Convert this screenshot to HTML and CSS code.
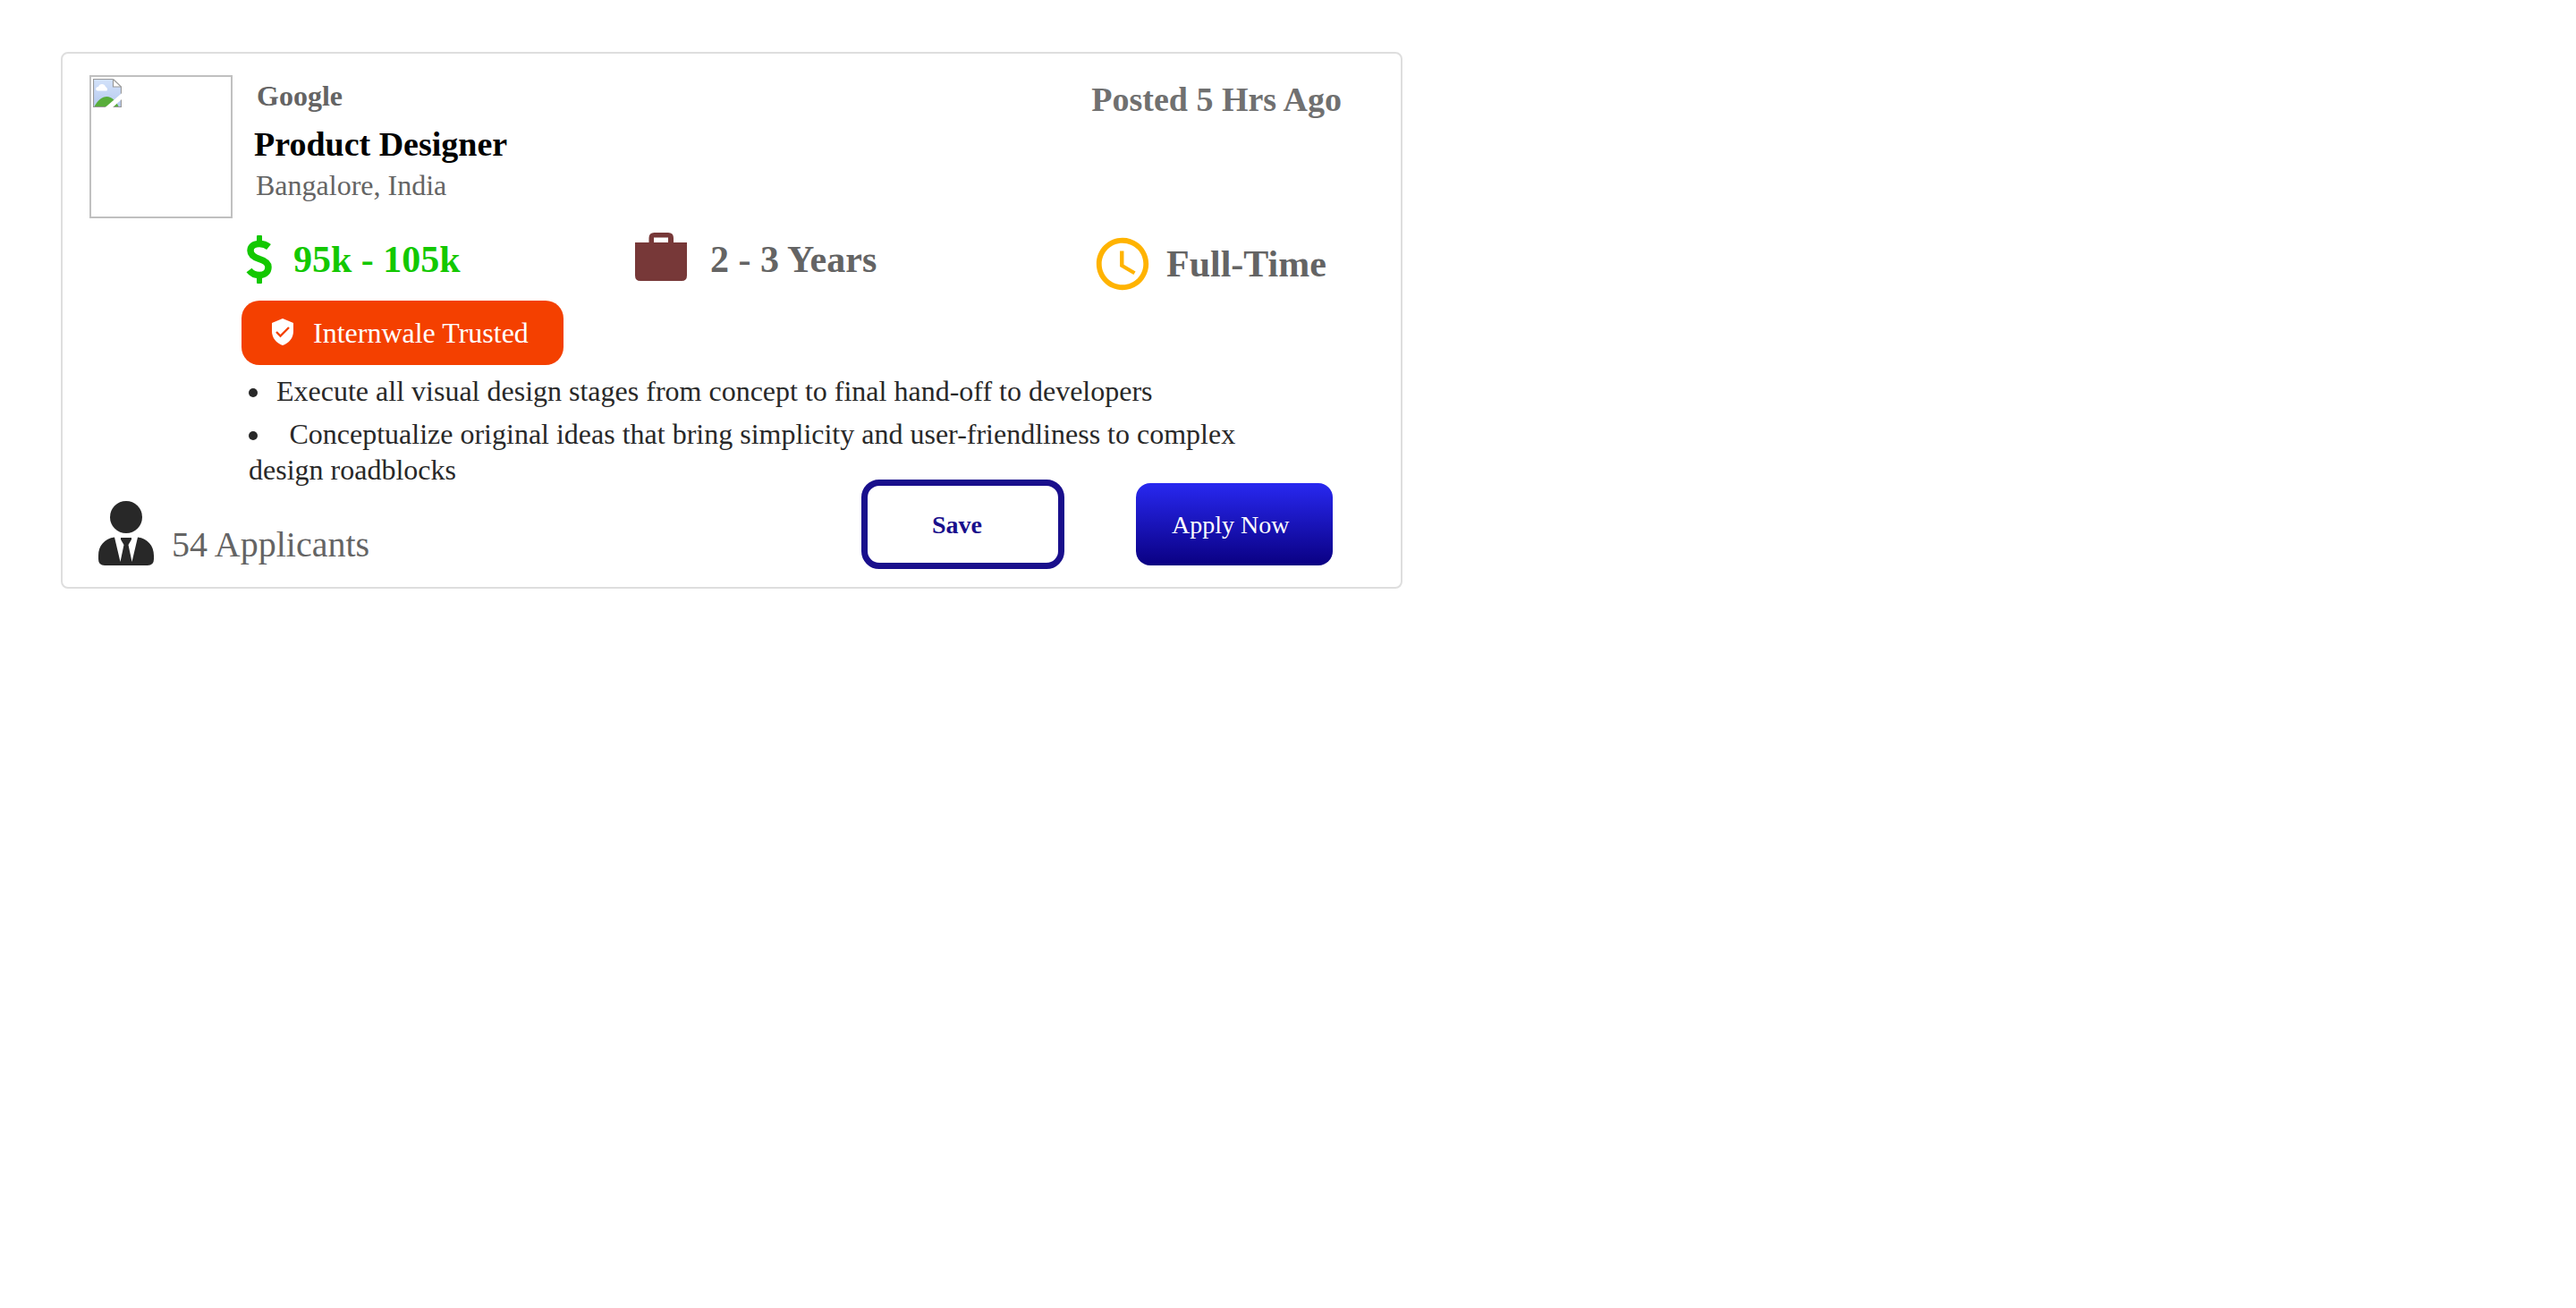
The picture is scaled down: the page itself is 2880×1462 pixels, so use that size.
FILE: index.html
```html
<!DOCTYPE html>
<html lang="en">
<head>
  <meta charset="utf-8">
  <title>Product Designer at Google</title>
  <link rel="stylesheet" href="styles.css">
</head>
<body>
  <main class="page">
    <article class="card">
      <header class="card-header">
        <div class="logo">
          <svg class="logo-icon" viewBox="0 0 32 32" aria-hidden="true">
            <defs>
              <linearGradient id="sky" x1="0" y1="0" x2="0" y2="1">
                <stop offset="0" stop-color="#d3e2fa"/>
                <stop offset="1" stop-color="#b5c9ef"/>
              </linearGradient>
            </defs>
            <path d="M0.5 0.5H22L31.5 9.5V32H0.5Z" fill="url(#sky)"/>
            <path d="M1 32C5 24 10 20 15.500 20C21 20 26 25 29 32Z" fill="#58ad3b"/>
            <path d="M5 13.500C2 12.500 3 9 6 9C7 5 13 5 14 9C16 10 17 13 15 13.500Z" fill="#fff"/>
            <path d="M22.500 0.500V9H31.500" fill="#fff" stroke="#999" stroke-width="1.200"/>
            <path d="M22 0.500H0.500V31.500H31.500V9L22.500 0.500" fill="none" stroke="#999" stroke-width="1.200"/>
            <path d="M33 15.500V22L21 33H12.500Z" fill="#fff"/>
          </svg>
        </div>
        <div class="titles">
          <p class="company">Google</p>
          <h1 class="role">Product Designer</h1>
          <p class="location">Bangalore, India</p>
        </div>
        <p class="posted">Posted 5 Hrs Ago</p>
      </header>

      <div class="card-body">
        <div class="stats">
          <div class="stat stat-pay">
            <svg class="icon-dollar" viewBox="0 0 44 60" aria-hidden="true">
              <path d="M30.500 16C27.500 13.500 24 12.500 20 12.500C14 12.500 10 15.500 10 20C10 25 14 27.500 20 29.500C26.500 31.500 30 34 30 38.500C30 44 26 47.500 20 47.500C15 47.500 11.500 46 8.500 42" fill="none" stroke="currentColor" stroke-width="7.500"/>
              <rect x="17" y="3" width="6" height="10" rx="1" fill="currentColor"/>
              <rect x="17" y="47" width="6" height="10" rx="1" fill="currentColor"/>
            </svg>
            <span>95k - 105k</span>
          </div>
          <div class="stat">
            <svg class="icon-case" viewBox="0 0 70 60" aria-hidden="true">
              <path fill="#773838" fill-rule="evenodd" d="M0 11H15.500V6Q15.500 0 21.500 0H37Q43 0 43 6V11H58V48Q58 54 52 54H6Q0 54 0 48ZM21 5.500V11H37V5.500Z"/>
            </svg>
            <span>2 - 3 Years</span>
          </div>
          <div class="stat">
            <svg class="icon-clock" viewBox="0 0 24 24" aria-hidden="true">
              <path fill="#ffb300" d="M11.990 2C6.470 2 2 6.480 2 12s4.470 10 9.990 10C17.520 22 22 17.520 22 12S17.520 2 11.990 2zM12 20c-4.420 0-8-3.580-8-8s3.580-8 8-8 8 3.580 8 8-3.580 8-8 8zm.5-13H11v6l5.250 3.150.75-1.230-4.500-2.670z"/>
            </svg>
            <span>Full-Time</span>
          </div>
        </div>

        <div class="badge">
          <svg class="icon-shield" viewBox="0 0 24 34" aria-hidden="true">
            <path fill="#fff" d="M12 1L24 6V15C24 23 19 28.500 12 31C5 28.500 0 23 0 15V6Z"/>
            <path fill="none" stroke="#f44000" stroke-width="2.400" d="M5 16L9.500 20.500L19 11"/>
          </svg>
          <span>Internwale Trusted</span>
        </div>

        <ul class="duties">
          <li><span class="duty">Execute all visual design stages from concept to final hand-off to developers</span></li>
          <li><span class="duty">&nbsp;&thinsp;Conceptualize original ideas that bring simplicity and user-friendliness to complex design roadblocks</span></li>
        </ul>
      </div>

      <footer class="card-footer">
        <div class="applicants">
          <svg class="icon-person" viewBox="0 0 62 72" aria-hidden="true">
            <g fill="#282828">
              <circle cx="31" cy="18" r="18"/>
              <path d="M18 40.500L24.500 68L28.500 49L25 43V41H37V43L33.500 49L37.500 68L44 40.500C55 42 62 50 62 61V65Q62 72 55 72H7Q0 72 0 65V61C0 50 7 42 18 40.500Z"/>
            </g>
          </svg>
          <span>54 Applicants</span>
        </div>
        <div class="actions">
          <button class="btn btn-save" type="button">Save</button>
          <button class="btn btn-apply" type="button">Apply Now</button>
        </div>
      </footer>
    </article>
  </main>
</body>
</html>
```
FILE: styles.css
```css
* {
  box-sizing: border-box;
}

body {
  margin: 0;
  background: #fff;
  color: #282828;
  font-family: "Liberation Serif", "Times New Roman", serif;
  font-size: 32px;
  line-height: 40px;
}

h1,
p,
ul {
  margin: 0;
}

svg {
  display: block;
  flex: none;
}

.page {
  padding: 58px 68px;
}

.card {
  max-width: 1500px;
  padding: 24px 66px 20px 30px;
  border: 2px solid #dedede;
  border-radius: 8px;
}

.card-header {
  display: flex;
  align-items: flex-start;
  gap: 24px;
}

.logo {
  flex: none;
  width: 160px;
  height: 160px;
  padding: 2px;
  border: 2px solid #c0c0c0;
}

.logo-icon {
  width: 32px;
  height: 32px;
}

.titles {
  flex: 1;
  padding-top: 3px;
}

.company {
  padding-left: 3px;
  color: #646464;
  font-weight: bold;
}

.role {
  margin-top: 4px;
  color: #000;
  font-size: 38px;
  line-height: 60px;
}

.location {
  padding-left: 2px;
  color: #646464;
  line-height: 32px;
}

.posted {
  margin-top: 5px;
  color: #707070;
  font-size: 38px;
  font-weight: bold;
  line-height: 44px;
}

.card-body {
  padding: 16px 0 0 170px;
}

.stats {
  display: grid;
  grid-template-columns: 440fr 510fr 280fr;
  align-items: start;
}

.stat {
  display: flex;
  align-items: center;
  gap: 14px;
  color: #646464;
  font-size: 42px;
  font-weight: bold;
  white-space: nowrap;
}

.stat-pay {
  color: #13c800;
}

.icon-dollar {
  width: 44px;
  height: 60px;
}

.icon-case {
  width: 70px;
  height: 60px;
}

.icon-clock {
  width: 70px;
  height: 70px;
}

.badge {
  display: flex;
  align-items: center;
  gap: 22px;
  width: 360px;
  height: 72px;
  margin-top: 6px;
  padding-left: 34px;
  border-radius: 20px;
  background: #f44000;
  color: #fff;
}

.icon-shield {
  width: 24px;
  height: 34px;
}

.duties {
  display: grid;
  gap: 8px;
  margin-top: 9px;
  padding: 0 60px 0 8px;
  list-style: disc inside;
}

.duty {
  margin-left: -12px;
}

.card-footer {
  display: flex;
  justify-content: space-between;
  align-items: flex-end;
  margin-top: -9px;
  padding: 0 10px;
}

.applicants {
  display: flex;
  align-items: flex-end;
  gap: 20px;
  padding-bottom: 4px;
  color: #646464;
  font-size: 40px;
  line-height: 46px;
}

.icon-person {
  width: 62px;
  height: 72px;
}

.actions {
  display: flex;
  align-items: center;
  gap: 80px;
}

.btn {
  font-family: inherit;
  font-size: 28px;
  line-height: 32px;
  text-align: left;
  cursor: pointer;
}

.btn-save {
  width: 227px;
  height: 100px;
  padding: 2px 0 0 72px;
  border: 7px solid #190f8c;
  border-radius: 20px;
  background: #fff;
  color: #190f8c;
  font-weight: bold;
}

.btn-apply {
  width: 220px;
  height: 92px;
  padding: 2px 0 0 40px;
  border: 0;
  border-radius: 16px;
  background: linear-gradient(#2828f0, #0a0082);
  color: #fff;
}
```
